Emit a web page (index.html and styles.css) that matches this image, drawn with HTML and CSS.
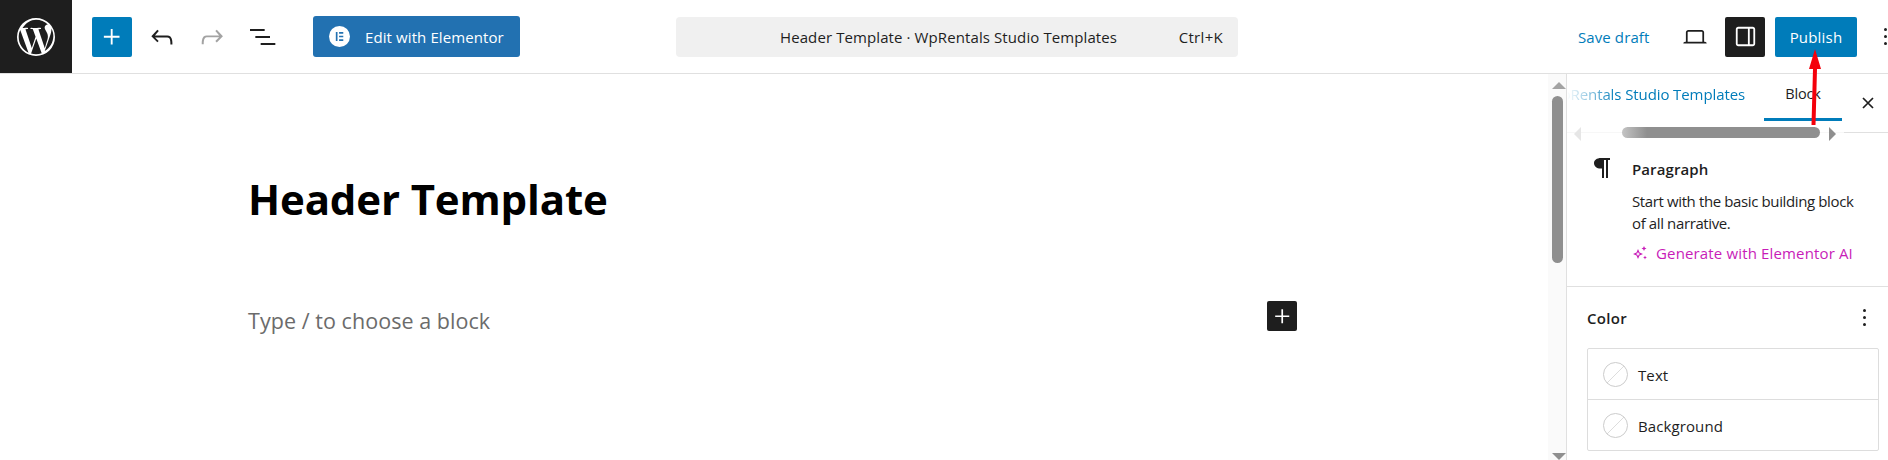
FILE: index.html
```html
<!DOCTYPE html>
<html lang="en">
<head>
<meta charset="utf-8">
<title>Header Template</title>
<link rel="stylesheet" href="styles.css">
</head>
<body>
<div class="app">
  <header class="topbar">
    <div class="wp-logo">
      <svg viewBox="0 0 80 80" width="38" height="38"><path fill="#fff" d="M40 0a40 40 0 1 0 0 80 40 40 0 0 0 0-80zm0 3.600c9.700 0 18.500 3.800 25 10-.2 0-.3 0-.5 0-3.700 0-6.300 3.200-6.300 6.600 0 3.100 1.800 5.700 3.700 8.800 1.400 2.500 3.100 5.700 3.100 10.300 0 3.200-1.200 6.900-2.800 12l-3.700 12.400-13.400-39.900c2.200-.1 4.200-.4 4.200-.4 2-.2 1.800-3.200-.2-3-6 .4-9.800.5-9.800.5s-3.600 0-9.500-.5c-2-.1-2.200 3-.2 3 0 0 1.900.2 3.800.4l5.700 15.500-8 24-13.300-39.500c2.200-.1 4.200-.4 4.200-.4 2-.2 1.800-3.200-.2-3-5.900.4-9.700.5-10.100.5C18.900 10 28.800 3.600 40 3.600zM3.600 40c0-5.300 1.100-10.300 3.200-14.800L24.200 73C12.100 67.100 3.600 54.500 3.600 40zM40 76.400c-3.600 0-7-.5-10.300-1.500l10.900-31.700 11.200 30.700c.1.200.2.400.3.500-3.800 1.300-7.900 2-12.100 2zm32.600-53.900c2.500 4.600 3.900 9.900 3.900 15.500 0 13.400-7.300 25.100-18.100 31.400L69.600 37.300c2.100-5.200 2.800-9.400 2.800-13.100 0-.6 0-1.200-.1-1.700z"/></svg>
    </div>
    <div class="tools">
      <button class="add-btn" aria-label="Add">
        <svg viewBox="0 0 24 24" width="30" height="30"><path fill="#fff" d="M11 12.500V18h1.500v-5.500H18V11h-5.500V5.500H11V11H5.500v1.500z"/></svg>
      </button>
      <span class="tool">
        <svg viewBox="0 0 24 24" width="32" height="32"><path fill="#1e1e1e" d="M18.300 11.700c-.6-.6-1.400-.9-2.300-.9H6.700l2.900-3.300-1.100-1-4.500 5L8.500 16l1-1-2.700-2.700H16c.5 0 .9.200 1.300.5 1 1 1 3.400 1 4.500v.3h1.500v-.200c0-1.500 0-4.300-1.500-5.700z"/></svg>
      </span>
      <span class="tool">
        <svg viewBox="0 0 24 24" width="32" height="32"><path fill="#a3a3a3" d="M15.600 6.500l-1.100 1 2.900 3.300H8c-.9 0-1.700.3-2.300.9-1.400 1.500-1.400 4.200-1.400 5.600v.2h1.500v-.3c0-1.100 0-3.500 1-4.500.3-.3.700-.5 1.300-.5h9.200L14.500 15l1.100 1.100 4.600-4.600-4.600-5z"/></svg>
      </span>
      <span class="tool">
        <svg viewBox="0 0 24 24" width="32" height="32"><path fill="#1e1e1e" d="M3 6h11v1.500H3V6zm4 5.200h11v1.500H7v-1.500zM11 16.500h11V18H11v-1.500z"/></svg>
      </span>
      <button class="elementor-btn">
        <span class="e-badge">
          <svg viewBox="0 0 20 20" width="21" height="21"><circle cx="10" cy="10" r="10" fill="#fff"/><path fill="#2271b1" d="M6.500 5.800h1.600v8.400H6.500zM9.600 5.800h4v1.600h-4zM9.600 9.200h4v1.600h-4zM9.600 12.600h4v1.600h-4z"/></svg>
        </span>
        <span>Edit with Elementor</span>
      </button>
    </div>
    <div class="command-bar">
      <span class="command-title">Header Template · WpRentals Studio Templates</span>
      <span class="command-key">Ctrl+K</span>
    </div>
    <div class="actions">
      <span class="save-draft">Save draft</span>
      <span class="device">
        <svg viewBox="0 0 24 24" width="28" height="28"><path fill="#1e1e1e" d="M20.500 16h-.7V8c0-1.100-.9-2-2-2H6.200c-1.100 0-2 .9-2 2v8h-.7c-.8 0-1.500.7-1.500 1.500h20c0-.8-.7-1.500-1.500-1.500zM5.700 8c0-.3.2-.5.500-.5h11.600c.3 0 .5.200.5.500v8H5.700V8z"/></svg>
      </span>
      <button class="panel-btn" aria-label="Settings">
        <svg viewBox="0 0 24 24" width="29" height="29"><path fill="#fff" d="M18 4H6c-1.100 0-2 .9-2 2v12c0 1.100.9 2 2 2h12c1.100 0 2-.9 2-2V6c0-1.100-.9-2-2-2zM5.500 18V6c0-.3.2-.5.500-.5h8v13H6c-.3 0-.5-.2-.5-.5zm13 0c0 .3-.2.5-.5.500h-2.500v-13H18c.3 0 .5.200.5.500v12z"/></svg>
      </button>
      <button class="publish-btn">Publish</button>
      <span class="more-top"><i></i><i></i><i></i></span>
    </div>
  </header>
  <div class="workspace">
    <main class="editor">
      <h1 class="post-title">Header Template</h1>
      <div class="block-row">
        <p class="placeholder">Type / to choose a block</p>
        <span class="inserter">
          <svg viewBox="0 0 24 24" width="27" height="27"><path fill="#fff" d="M11 12.500V18h1.500v-5.500H18V11h-5.500V5.500H11V11H5.500v1.500z"/></svg>
        </span>
      </div>
    </main>
    <div class="v-scroll">
      <span class="arrow-up"></span>
      <span class="v-thumb"></span>
      <span class="arrow-down"></span>
    </div>
    <aside class="sidebar">
      <div class="tabs">
        <div class="tab-post"><span class="tab-post-text">WpRentals Studio Templates</span></div>
        <div class="tab-block">Block</div>
        <div class="close">
          <svg viewBox="0 0 12 12" width="12" height="12"><path fill="none" stroke="#1e1e1e" stroke-width="1.700" d="M1 1l10 10M11 1L1 11"/></svg>
        </div>
        <div class="h-scroll">
          <span class="h-left"></span>
          <span class="h-thumb"></span>
          <span class="h-right"></span>
        </div>
      </div>
      <section class="block-card">
        <span class="pilcrow">
          <svg viewBox="0 0 18 22" width="18" height="22"><path fill="#1e1e1e" d="M8 1h9v2h-2v18h-2V3h-2v18H9v-9.500H7.500C3.800 11.500 1 9.200 1 6.200S3.800 1 8 1z"/></svg>
        </span>
        <div class="card-body">
          <h2 class="card-title">Paragraph</h2>
          <p class="card-desc">Start with the basic building block of all narrative.</p>
          <div class="ai-link">
            <svg viewBox="0 0 16 16" width="16" height="16"><path fill="#c81cb8" d="M6 4l1.500 3.500L11 9 7.500 10.500 6 14l-1.500-3.500L1 9l3.500-1.500zm0 2.800L5.400 8.300 3.900 9l1.500.7.600 1.500.6-1.500L8.100 9l-1.500-.7z"/><path fill="#c81cb8" d="M12 1l.8 1.700 1.700.8-1.700.8L12 6l-.8-1.700-1.700-.8 1.700-.8zM13 10.500l.6 1.400 1.400.6-1.400.6-.6 1.400-.6-1.400-1.400-.6 1.400-.6z"/></svg>
            <span>Generate with Elementor AI</span>
          </div>
        </div>
      </section>
      <section class="color-panel">
        <div class="color-head">
          <h2 class="color-title">Color</h2>
          <span class="more-color"><i></i><i></i><i></i></span>
        </div>
        <div class="color-list">
          <div class="color-row"><span class="swatch"></span><span class="color-label">Text</span></div>
          <div class="color-row"><span class="swatch"></span><span class="color-label">Background</span></div>
        </div>
      </section>
    </aside>
  </div>
  <svg class="red-arrow" viewBox="0 0 30 80" width="30" height="80"><path fill="#f4000b" d="M15 0l6 20h-4l-1.500 56h-4L13 20H9z"/></svg>
</div>
</body>
</html>
```
FILE: styles.css
```css
* { box-sizing: border-box; }
html, body { margin: 0; height: 100%; overflow: hidden; background: #fff; }
body { font-family: "Open Sans", "Noto Sans", sans-serif; color: #1e1e1e; font-size: 13px; }
button { font-family: inherit; border: 0; padding: 0; cursor: pointer; }
h1, h2, p { margin: 0; }
.app { position: relative; width: 1888px; height: 460px; overflow: hidden; }

.topbar { display: flex; align-items: center; height: 74px; border-bottom: 1px solid #e0e0e0; }
.wp-logo { width: 72px; height: 73px; background: #1e1e1e; display: flex; align-items: center; justify-content: center; flex: none; }
.tools { display: flex; align-items: center; margin-left: 20px; width: 428px; flex: none; }
.add-btn { width: 40px; height: 40px; background: #007cba; border-radius: 2px; display: flex; align-items: center; justify-content: center; flex: none; }
.tool { width: 32px; height: 32px; margin-left: 18px; flex: none; display: block; }
.tool svg { display: block; }
.add-btn + .tool { margin-left: 14px; }
.elementor-btn { display: flex; align-items: center; gap: 15px; margin-left: 35px; width: 207px; height: 41px; padding-left: 16px; background: #2271b1; color: #fff; font-size: 15px; border-radius: 3px; white-space: nowrap; letter-spacing: .1px; flex: none; }
.e-badge { display: block; width: 21px; height: 21px; }
.e-badge svg { display: block; }

.command-bar { width: 562px; height: 40px; margin-left: 156px; background: #f0f0f0; border-radius: 4px; display: flex; align-items: center; flex: none; }
.command-title { margin-left: 104px; font-size: 15px; letter-spacing: .1px; white-space: nowrap; color: #1e1e1e; }
.command-key { margin-left: auto; margin-right: 15px; font-size: 15px; letter-spacing: .3px; color: #1e1e1e; }

.actions { display: flex; align-items: center; margin-left: 340px; flex: none; }
.save-draft { color: #007cba; font-size: 15px; white-space: nowrap; width: 72px; letter-spacing: .1px; }
.device { width: 28px; height: 28px; margin-left: 31px; display: block; }
.device svg { display: block; }
.panel-btn { width: 40px; height: 40px; margin-left: 16px; background: #1e1e1e; border-radius: 2px; display: flex; align-items: center; justify-content: center; }
.publish-btn { width: 82px; height: 40px; margin-left: 10px; background: #007cba; color: #fff; font-size: 15px; border-radius: 2px; letter-spacing: .2px; }
.more-top { display: flex; flex-direction: column; gap: 4px; margin-left: 27px; width: 3px; flex: none; }
.more-top i, .more-color i { display: block; width: 3px; height: 3px; border-radius: 50%; background: #1e1e1e; }

.workspace { display: flex; height: 386px; }
.editor { width: 1548px; flex: none; padding: 101px 0 0 248px; }
.post-title { font-size: 42px; line-height: 48px; font-weight: 700; color: #000; letter-spacing: -.15px; white-space: nowrap; }
.block-row { display: flex; align-items: flex-start; margin-top: 78px; }
.placeholder { font-size: 21.500px; line-height: 30px; color: #6b6b6b; letter-spacing: .05px; margin-top: 5px; width: 1019px; white-space: nowrap; }
.inserter { width: 30px; height: 30px; background: #1e1e1e; border-radius: 2px; display: flex; align-items: center; justify-content: center; }

.v-scroll { position: relative; width: 18px; flex: none; background: #fafafa; }
.arrow-up { position: absolute; left: 4px; top: 8px; border: 7px solid transparent; border-top: 0; border-bottom: 7px solid #a3a3a3; }
.v-thumb { position: absolute; left: 4px; top: 22px; width: 11px; height: 167px; border-radius: 6px; background: #8f8f8f; }
.arrow-down { position: absolute; left: 4px; bottom: 0; border: 7px solid transparent; border-bottom: 0; border-top: 7px solid #8f8f8f; }

.sidebar { width: 322px; flex: none; border-left: 1px solid #e0e0e0; }
.tabs { position: relative; height: 59px; border-bottom: 1px solid #e0e0e0; }
.tab-post { position: absolute; left: 0; top: 0; width: 178px; height: 40px; overflow: hidden; display: flex; justify-content: flex-end; align-items: center; -webkit-mask-image: linear-gradient(to right, transparent 0, #000 50px); mask-image: linear-gradient(to right, transparent 0, #000 50px); }
.tab-post-text { color: #007cba; font-size: 15px; white-space: nowrap; flex: none; letter-spacing: -.1px; }
.tab-block { position: absolute; left: 197px; top: 0; width: 78px; height: 47px; border-bottom: 3px solid #007cba; text-align: center; font-size: 14.500px; line-height: 40px; letter-spacing: -.15px; }
.close { position: absolute; left: 295px; top: 23px; width: 12px; height: 12px; }
.close svg { display: block; }
.h-scroll { position: absolute; left: 0; top: 50px; width: 277px; height: 19px; background: rgba(255,255,255,.75); }
.h-left { position: absolute; left: 7px; top: 3px; border: 7px solid transparent; border-left: 0; border-right: 7px solid #e6e6e6; }
.h-thumb { position: absolute; left: 55px; top: 3px; width: 198px; height: 11px; border-radius: 6px; background: linear-gradient(to right, #c4c4c4, #8f8f8f 25px); }
.h-right { position: absolute; left: 262px; top: 3px; border: 7px solid transparent; border-right: 0; border-left: 7px solid #8f8f8f; }

.block-card { display: flex; height: 154px; padding: 26px 16px 0 26px; border-bottom: 1px solid #e0e0e0; }
.pilcrow { width: 18px; height: 22px; flex: none; display: block; margin-top: -2px; }
.pilcrow svg { display: block; }
.card-body { margin-left: 21px; width: 232px; }
.card-title { font-size: 15px; line-height: 20px; font-weight: 600; letter-spacing: .1px; }
.card-desc { margin-top: 11px; font-size: 15px; line-height: 22px; letter-spacing: -.38px; }
.ai-link { display: flex; align-items: center; gap: 8px; margin-top: 9px; color: #c81cb8; font-size: 15px; line-height: 20px; letter-spacing: .15px; white-space: nowrap; }
.color-panel { padding: 0 9px 0 20px; }
.color-head { display: flex; justify-content: space-between; align-items: center; height: 61px; }
.color-title { font-size: 15px; font-weight: 600; letter-spacing: .3px; }
.more-color { display: flex; flex-direction: column; gap: 4px; margin-right: 13px; }
.color-list { border: 1px solid #ddd; border-radius: 2px; }
.color-row { display: flex; align-items: center; gap: 10px; height: 50px; padding-left: 15px; font-size: 15px; letter-spacing: .1px; }
.color-row + .color-row { border-top: 1px solid #ddd; height: 51px; }
.color-label { padding-top: 1px; }
.swatch { width: 25px; height: 25px; border-radius: 50%; border: 1px solid #ccc; background: linear-gradient(-45deg, transparent 48%, #ddd 48%, #ddd 52%, transparent 52%); flex: none; }

.red-arrow { position: absolute; left: 1800px; top: 49px; }
```
